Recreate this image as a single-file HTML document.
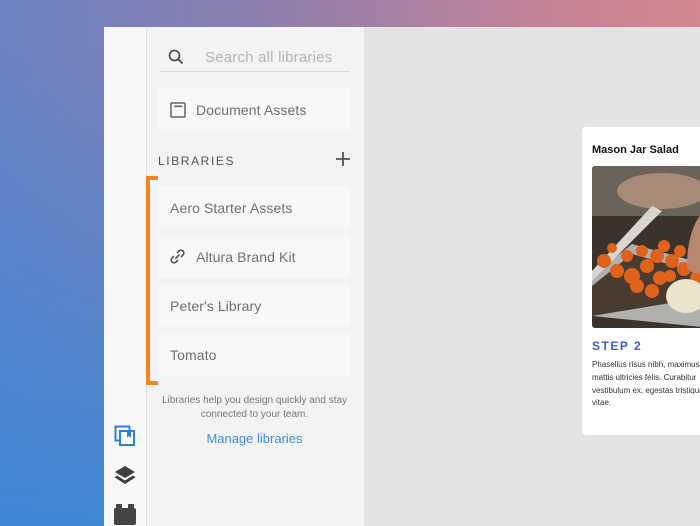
<!DOCTYPE html>
<html><head><meta charset="utf-8"><style>
*{margin:0;padding:0;box-sizing:border-box}
body{width:700px;height:526px;overflow:hidden;position:relative;font-family:"Liberation Sans",sans-serif;
background:linear-gradient(180deg,rgba(61,136,212,0) 0%,rgba(61,136,212,0) 10%,rgba(58,136,214,0.9) 100%),linear-gradient(90deg,#6c82c4 0%,#8a7fae 35%,#c68396 80%,#d4878f 100%);}
.win{position:absolute;left:104px;top:27px;width:596px;height:499px;background:#e4e4e4}
.rail{position:absolute;left:0;top:0;width:43px;height:499px;background:#f7f7f7;border-right:1px solid #e0e0e0}
.panel{position:absolute;left:43px;top:0;width:217px;height:499px;background:#f3f3f3}
.abs{position:absolute}
.item{position:absolute;left:54px;width:193px;height:43px;background:#f8f8f8;border-radius:4px;font-size:14px;color:#707070;line-height:45px;padding-left:12px;letter-spacing:0.1px}
.card{position:absolute;left:478px;top:100px;width:130px;height:308px;background:#fff;border-radius:4px}
</style></head><body>
<div class="win">
 <div class="rail">
  <svg class="abs" style="left:10px;top:398px" width="22" height="22" viewBox="0 0 22 22"><rect x="1.5" y="1.5" width="14" height="14" fill="none" stroke="#2d7fe0" stroke-width="2"/><rect x="6" y="6" width="14" height="14" fill="#fff" stroke="#2d7fe0" stroke-width="2"/><path d="M13 6v7l2-2 2 2V6z" fill="#2d7fe0"/></svg>
  <svg class="abs" style="left:10px;top:437px" width="22" height="22" viewBox="0 0 22 22"><path d="M11 2L21 8 11 14 1 8z" fill="#3e3e3e"/><path d="M3 11.5l8 5 8-5 2.5 1.8L11 20 .5 13.3z" fill="#3e3e3e"/></svg>
  <svg class="abs" style="left:9px;top:476px" width="24" height="22" viewBox="0 0 24 22"><rect x="1" y="5" width="22" height="17" rx="2" fill="#444"/><rect x="3" y="1" width="6" height="6" rx="1" fill="#444"/><rect x="15" y="1" width="6" height="6" rx="1" fill="#444"/></svg>
 </div>
 <div class="panel">
  <svg class="abs" style="left:21px;top:22px" width="16" height="16" viewBox="0 0 16 16"><circle cx="6.5" cy="6.5" r="5" fill="none" stroke="#444" stroke-width="1.6"/><path d="M10 10l4.5 4.5" stroke="#444" stroke-width="1.8"/></svg>
  <div class="abs" style="left:58px;top:22px;font-size:15px;color:#b4b4b4;letter-spacing:0.2px">Search all libraries</div>
  <div class="abs" style="left:13px;top:44px;width:190px;height:1px;background:#dadada"></div>
 </div>
 <div class="item" style="top:61px;padding-left:38px">Document Assets</div>
 <svg class="abs" style="left:66px;top:75px" width="16" height="16" viewBox="0 0 16 16"><rect x="1" y="1" width="14" height="14" rx="1" fill="none" stroke="#666" stroke-width="1.5"/><rect x="4" y="3.5" width="8" height="1.6" fill="#666"/></svg>
 <div class="abs" style="left:54px;top:127px;font-size:12px;color:#555;letter-spacing:1.6px">LIBRARIES</div>
 <svg class="abs" style="left:232px;top:125px" width="14" height="14" viewBox="0 0 14 14"><path d="M7 0v14M0 7h14" stroke="#555" stroke-width="1.8"/></svg>
 <div class="abs" style="left:42px;top:149px;width:12px;height:209px;border:4px solid #f5841f;border-right:none"></div>
 <div class="item" style="top:159px">Aero Starter Assets</div>
 <div class="item" style="top:208px;padding-left:38px">Altura Brand Kit</div>
 <svg class="abs" style="left:65px;top:221px" width="17" height="17" viewBox="0 0 17 17"><g fill="none" stroke="#555" stroke-width="1.6" stroke-linecap="round"><path d="M7 10l3-3"/><path d="M8.5 4.5l1.5-1.5a2.8 2.8 0 014 4l-1.5 1.5"/><path d="M8.5 12.5L7 14a2.8 2.8 0 01-4-4l1.5-1.5"/></g></svg>
 <div class="item" style="top:257px">Peter's Library</div>
 <div class="item" style="top:306px">Tomato</div>
 <div class="abs" style="left:54px;top:367px;width:193px;text-align:center;font-size:10px;color:#777;line-height:14px">Libraries help you design quickly and stay connected to your team.</div>
 <div class="abs" style="left:54px;top:404px;width:193px;text-align:center;font-size:13px;color:#3c8ee0">Manage libraries</div>
 <div class="card">
  <div class="abs" style="left:10px;top:17px;font-size:11px;font-weight:bold;color:#111">Mason Jar Salad</div>
  <svg class="abs" style="left:10px;top:39px;border-radius:3px" width="120" height="162" viewBox="0 0 120 162">
   <rect width="120" height="162" fill="#3a332c"/>
   <rect width="120" height="50" fill="#6b625a"/>
   <ellipse cx="70" cy="25" rx="45" ry="18" fill="#a88a78"/>
   <path d="M0 150L0 110 40 78 120 100 120 162z" fill="#b0b0ae"/>
   <path d="M0 120L40 88 120 110 120 130 0 150z" fill="#4a3b30"/>
   <path d="M0 105L60 40 70 45 0 115z" fill="#d8d6d2"/>
   <g fill="#e0621d">
    <circle cx="12" cy="95" r="7"/><circle cx="25" cy="105" r="7"/><circle cx="40" cy="110" r="8"/><circle cx="35" cy="90" r="6"/><circle cx="50" cy="85" r="6"/><circle cx="55" cy="100" r="7"/><circle cx="68" cy="112" r="7"/><circle cx="65" cy="90" r="7"/><circle cx="80" cy="95" r="7"/><circle cx="78" cy="110" r="6"/><circle cx="92" cy="103" r="7"/><circle cx="45" cy="120" r="7"/><circle cx="60" cy="125" r="7"/><circle cx="72" cy="80" r="6"/><circle cx="88" cy="85" r="6"/><circle cx="105" cy="112" r="7"/><circle cx="20" cy="82" r="5"/>
   </g>
   <ellipse cx="94" cy="130" rx="20" ry="17" fill="#ece4cf"/>
   <ellipse cx="122" cy="140" rx="12" ry="20" fill="#e8e0cc"/>
   <path d="M95 100C95 70 105 45 120 40L120 110C110 105 100 112 95 100z" fill="#b88770"/>
  </svg>
  <div class="abs" style="left:10px;top:212px;font-size:12px;font-weight:bold;color:#3b5bdb;letter-spacing:1.5px">STEP 2</div>
  <div class="abs" style="left:10px;top:232px;width:140px;font-size:8px;color:#333;line-height:12.8px;white-space:nowrap">Phasellus risus nibh, maximus<br>mattis ultricies felis. Curabitur<br>vestibulum ex, egestas tristique<br>vitae.</div>
 </div>
</div>
</body></html>
